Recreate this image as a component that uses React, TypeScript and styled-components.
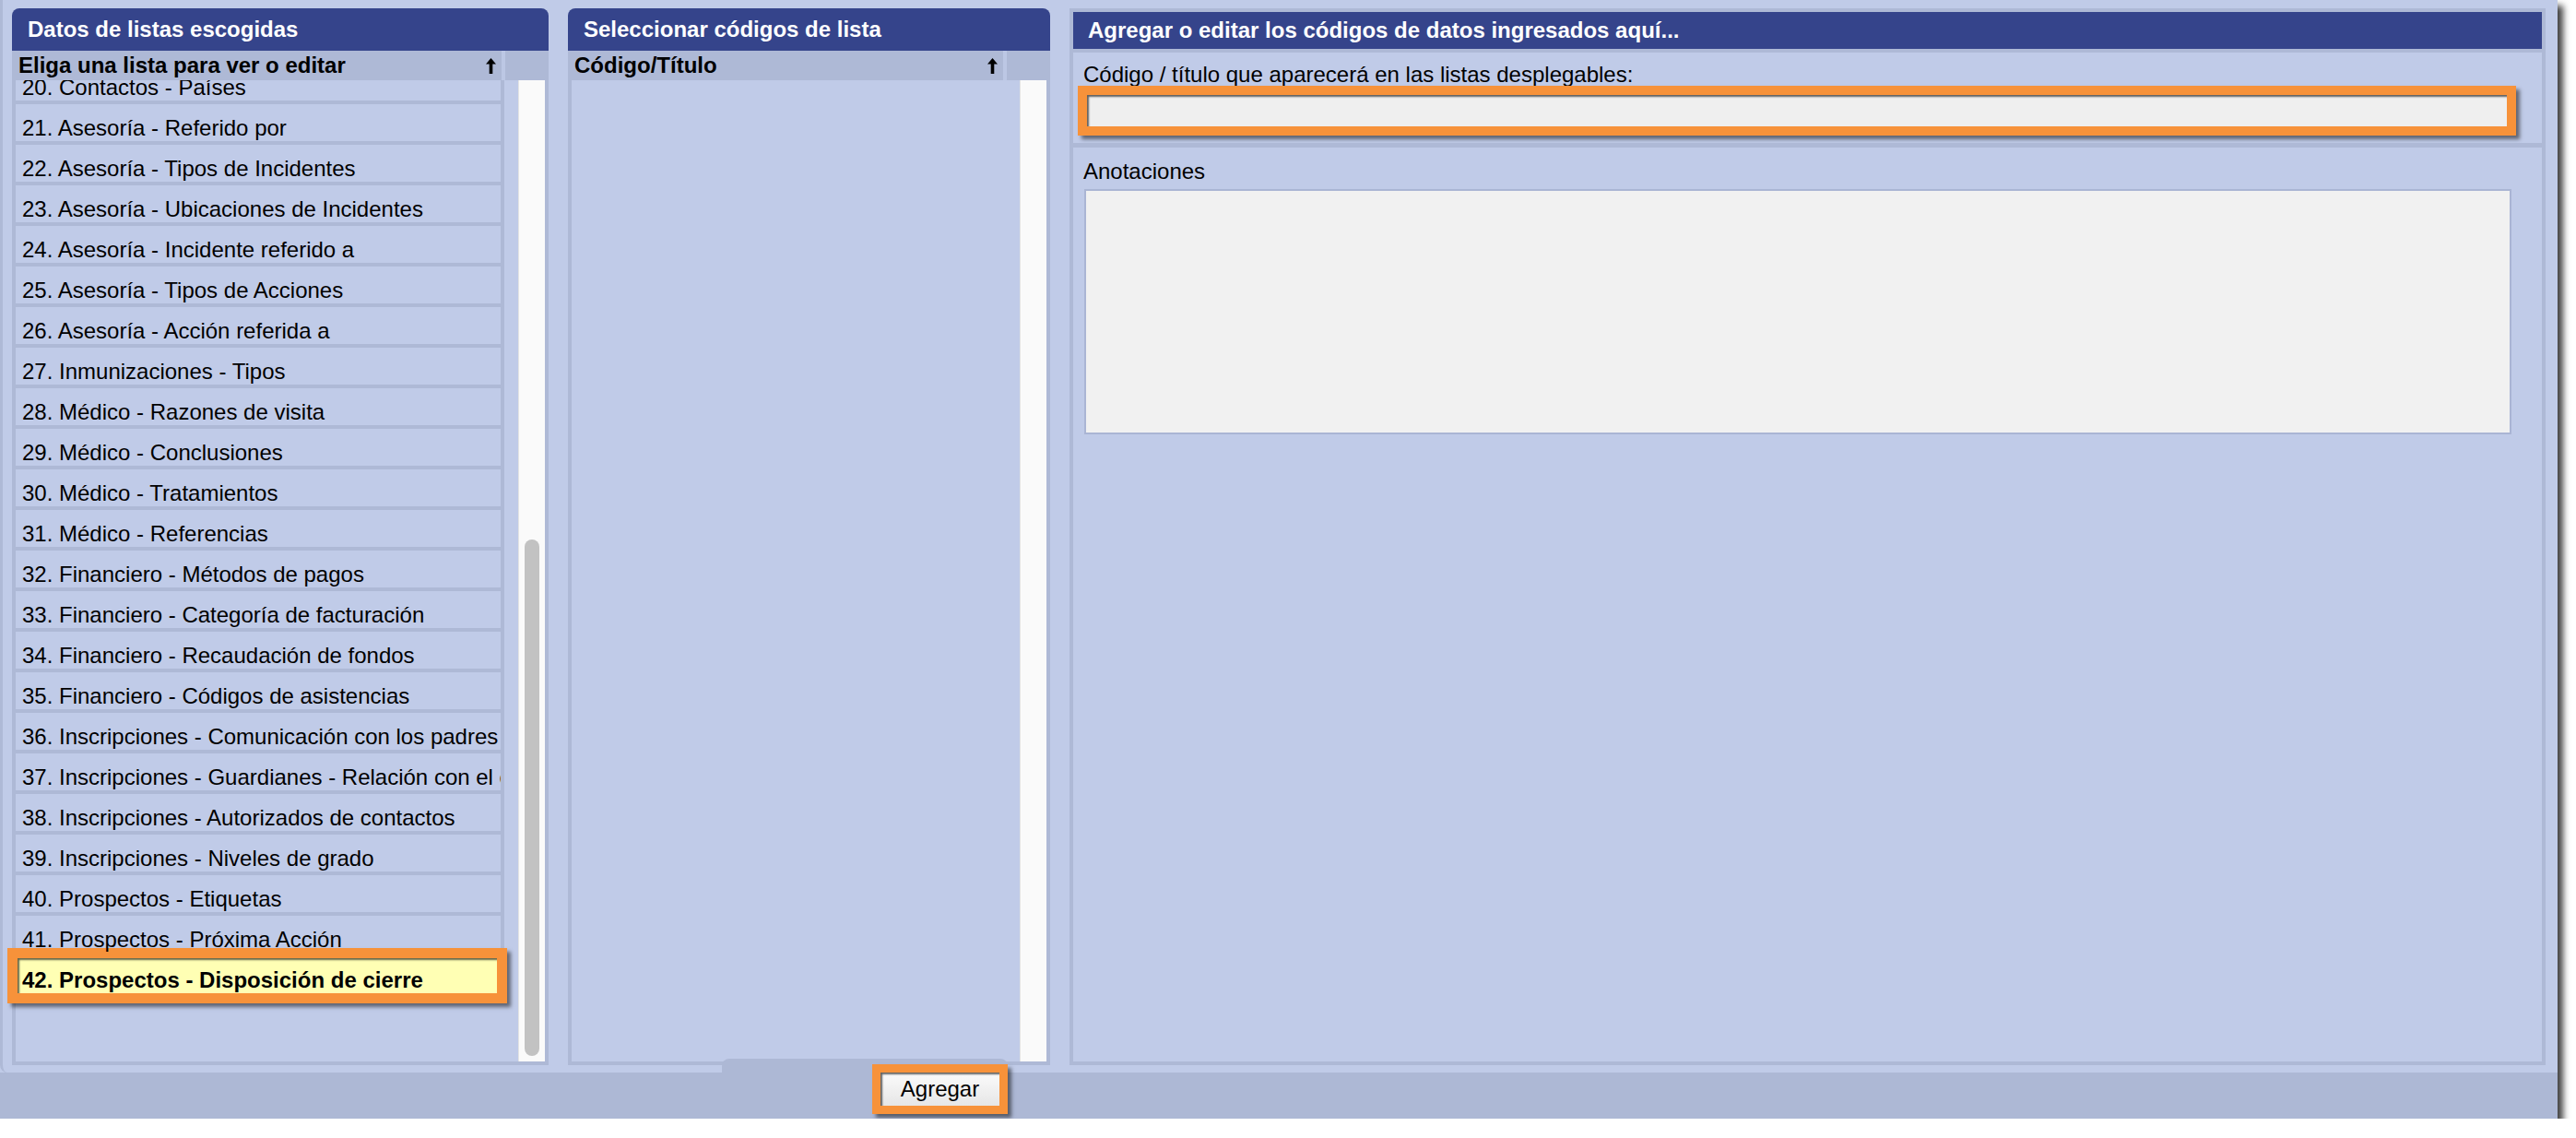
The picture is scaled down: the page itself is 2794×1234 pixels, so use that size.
import React from 'react'
import styled, { createGlobalStyle } from 'styled-components'

const GlobalStyle = createGlobalStyle`
  *, *::before, *::after {
    box-sizing: border-box;
  }
  html, body {
    margin: 0;
    padding: 0;
    background: #ffffff;
  }
  body {
    font-family: "Liberation Sans", Arial, Helvetica, sans-serif;
    font-size: 24px;
    line-height: 28px;
    color: #000000;
  }
`

const Window = styled.div`
  width: 2774px;
  height: 1213px;
  display: flex;
  flex-direction: column;
  background: #c0cbe8;
  box-shadow: 6px 6px 7px rgba(0, 0, 0, 0.75);
`
const Workspace = styled.div`
  flex: 1;
  min-height: 0;
  display: flex;
  gap: 21px;
  padding: 9px 13px 8px 10px;
  border-left: 3px solid #aeb9d6;
  border-bottom-left-radius: 8px;
`
const ListPanel = styled.section<{ $width: number }>`
  width: ${({ $width }) => $width}px;
  flex-shrink: 0;
  display: flex;
  flex-direction: column;
`
const PanelHeader = styled.div`
  height: 46px;
  display: flex;
  align-items: center;
  padding-left: 17px;
  background: #35448b;
  color: #ffffff;
  font-weight: bold;
  white-space: nowrap;
  border-radius: 8px 8px 0 0;
`
const ColumnHeader = styled.div`
  height: 32px;
  display: flex;
  background: #aeb9d6;
`
const ColumnCell = styled.div`
  flex: 1;
  min-width: 0;
  display: flex;
  align-items: center;
  justify-content: space-between;
  padding: 0 6px 0 7px;
  font-weight: bold;
  white-space: nowrap;
  border-right: 4px solid #bcc7e4;
`
const ColumnRest = styled.div`
  width: 47px;
`
const ListBody = styled.div`
  flex: 1;
  min-height: 0;
  display: flex;
  border: 4px solid #aeb9d6;
  border-top: none;
`
const ListArea = styled.div`
  flex: 1;
  min-width: 0;
  padding-right: 15px;
  overflow-x: visible;
  overflow-y: clip;
`
const ListInner = styled.div<{ $offset: number }>`
  margin-top: -${({ $offset }) => $offset}px;
`
const Row = styled.div<{ $selected?: boolean }>`
  height: 44px;
  padding: 12px 0 0 7px;
  white-space: nowrap;
  overflow: hidden;
  background: #c0cbe8;
  border-bottom: 4px solid #aeb9d6;
  border-right: 4px solid #aeb9d6;
  ${({ $selected }) =>
    $selected &&
    `
    height: 38px;
    margin: 2px 8px 4px 2px;
    padding: 10px 0 0 5px;
    border: none;
    background: #ffffb4;
    font-weight: bold;
    box-shadow: inset 2px 2px 2px rgba(0, 0, 0, 0.6),
      0 0 0 11px #f7923a,
      4px 4px 4px 11px rgba(0, 0, 0, 0.5);
  `}
`
const Track = styled.div`
  width: 29px;
  flex-shrink: 0;
  display: flex;
  flex-direction: column;
  align-items: center;
  background: #fafafa;
  border-left: 1px solid #e4e4e4;
`
const Thumb = styled.div<{ $top: number; $size: number }>`
  width: 16px;
  height: ${({ $size }) => $size}px;
  margin-top: ${({ $top }) => $top}px;
  border-radius: 8px;
  background: #c2c2c2;
`
const EditPanel = styled.section`
  flex: 1;
  min-width: 0;
  display: flex;
  flex-direction: column;
  border: 4px solid #aeb9d6;
`
const EditHeader = styled(PanelHeader)`
  height: 40px;
  padding-left: 16px;
  border-radius: 0;
`
const FormSection = styled.div<{ $grow?: boolean; $line: number }>`
  display: flex;
  flex-direction: column;
  padding: ${({ $grow }) => ($grow ? '12px 0 0 11px' : '10px 0 18px 11px')};
  border-top: ${({ $line }) => $line}px solid #aeb9d6;
  ${({ $grow }) => $grow && 'flex: 1;'}
`
const FieldLabel = styled.label`
  white-space: nowrap;
`
const TitleInput = styled.input`
  width: calc(100% - 42px);
  height: 34px;
  margin: 8px 0 0 4px;
  padding: 0 8px;
  border: none;
  outline: none;
  background: #efefef;
  font: inherit;
  box-shadow: inset 2px 2px 2px rgba(0, 0, 0, 0.6),
    0 0 0 10px #f7923a,
    4px 4px 4px 10px rgba(0, 0, 0, 0.5);
`
const NotesArea = styled.textarea`
  width: calc(100% - 34px);
  height: 266px;
  margin: 5px 0 0 1px;
  border: 2px solid #aab5d4;
  background: #f1f1f1;
  font: inherit;
  resize: none;
  outline: none;
`
const Footer = styled.div`
  height: 50px;
  display: flex;
  padding-left: 783px;
  background: #adb8d5;
`
const ButtonTab = styled.div`
  width: 310px;
  height: 65px;
  margin-top: -15px;
  display: flex;
  justify-content: flex-end;
  align-items: flex-start;
  padding: 15px 9px 0 0;
  background: #adb8d5;
  border-radius: 8px 8px 0 0;
`
const AddButton = styled.button`
  width: 129px;
  height: 36px;
  padding: 0;
  border: none;
  font: inherit;
  color: #000000;
  background: linear-gradient(#fbfbfb, #e6e6e6);
  box-shadow: inset 2px 2px 2px rgba(0, 0, 0, 0.6),
    0 0 0 9px #f7923a,
    4px 4px 4px 9px rgba(0, 0, 0, 0.5);
`

const SortArrow = () => (
  <svg width="11" height="17" viewBox="0 0 11 17">
    <path d="M5.5 0 L11 6.5 H7.3 V17 H3.7 V6.5 H0 Z" fill="#000" />
  </svg>
)

const lists = [
  '20. Contactos - Países',
  '21. Asesoría - Referido por',
  '22. Asesoría - Tipos de Incidentes',
  '23. Asesoría - Ubicaciones de Incidentes',
  '24. Asesoría - Incidente referido a',
  '25. Asesoría - Tipos de Acciones',
  '26. Asesoría - Acción referida a',
  '27. Inmunizaciones - Tipos',
  '28. Médico - Razones de visita',
  '29. Médico - Conclusiones',
  '30. Médico - Tratamientos',
  '31. Médico - Referencias',
  '32. Financiero - Métodos de pagos',
  '33. Financiero - Categoría de facturación',
  '34. Financiero - Recaudación de fondos',
  '35. Financiero - Códigos de asistencias',
  '36. Inscripciones - Comunicación con los padres',
  '37. Inscripciones - Guardianes - Relación con el estudiante',
  '38. Inscripciones - Autorizados de contactos',
  '39. Inscripciones - Niveles de grado',
  '40. Prospectos - Etiquetas',
  '41. Prospectos - Próxima Acción',
  '42. Prospectos - Disposición de cierre'
]

const App = () => {
  const selected = lists.length - 1

  return (
    <>
      <GlobalStyle />
      <Window>
        <Workspace>
          <ListPanel $width={582}>
            <PanelHeader>Datos de listas escogidas</PanelHeader>
            <ColumnHeader>
              <ColumnCell>
                <span>Eliga una lista para ver o editar</span>
                <SortArrow />
              </ColumnCell>
              <ColumnRest />
            </ColumnHeader>
            <ListBody>
              <ListArea>
                <ListInner $offset={18}>
                  {lists.map((name, i) => (
                    <Row key={name} $selected={i === selected}>{name}</Row>
                  ))}
                </ListInner>
              </ListArea>
              <Track>
                <Thumb $top={498} $size={560} />
              </Track>
            </ListBody>
          </ListPanel>

          <ListPanel $width={523}>
            <PanelHeader>Seleccionar códigos de lista</PanelHeader>
            <ColumnHeader>
              <ColumnCell>
                <span>Código/Título</span>
                <SortArrow />
              </ColumnCell>
              <ColumnRest />
            </ColumnHeader>
            <ListBody>
              <ListArea />
              <Track />
            </ListBody>
          </ListPanel>

          <EditPanel>
            <EditHeader>Agregar o editar los códigos de datos ingresados aquí...</EditHeader>
            <FormSection $line={4}>
              <FieldLabel>Código / título que aparecerá en las listas desplegables:</FieldLabel>
              <TitleInput type="text" />
            </FormSection>
            <FormSection $line={5} $grow>
              <FieldLabel>Anotaciones</FieldLabel>
              <NotesArea />
            </FormSection>
          </EditPanel>
        </Workspace>
        <Footer>
          <ButtonTab>
            <AddButton>Agregar</AddButton>
          </ButtonTab>
        </Footer>
      </Window>
    </>
  )
}

export default App
